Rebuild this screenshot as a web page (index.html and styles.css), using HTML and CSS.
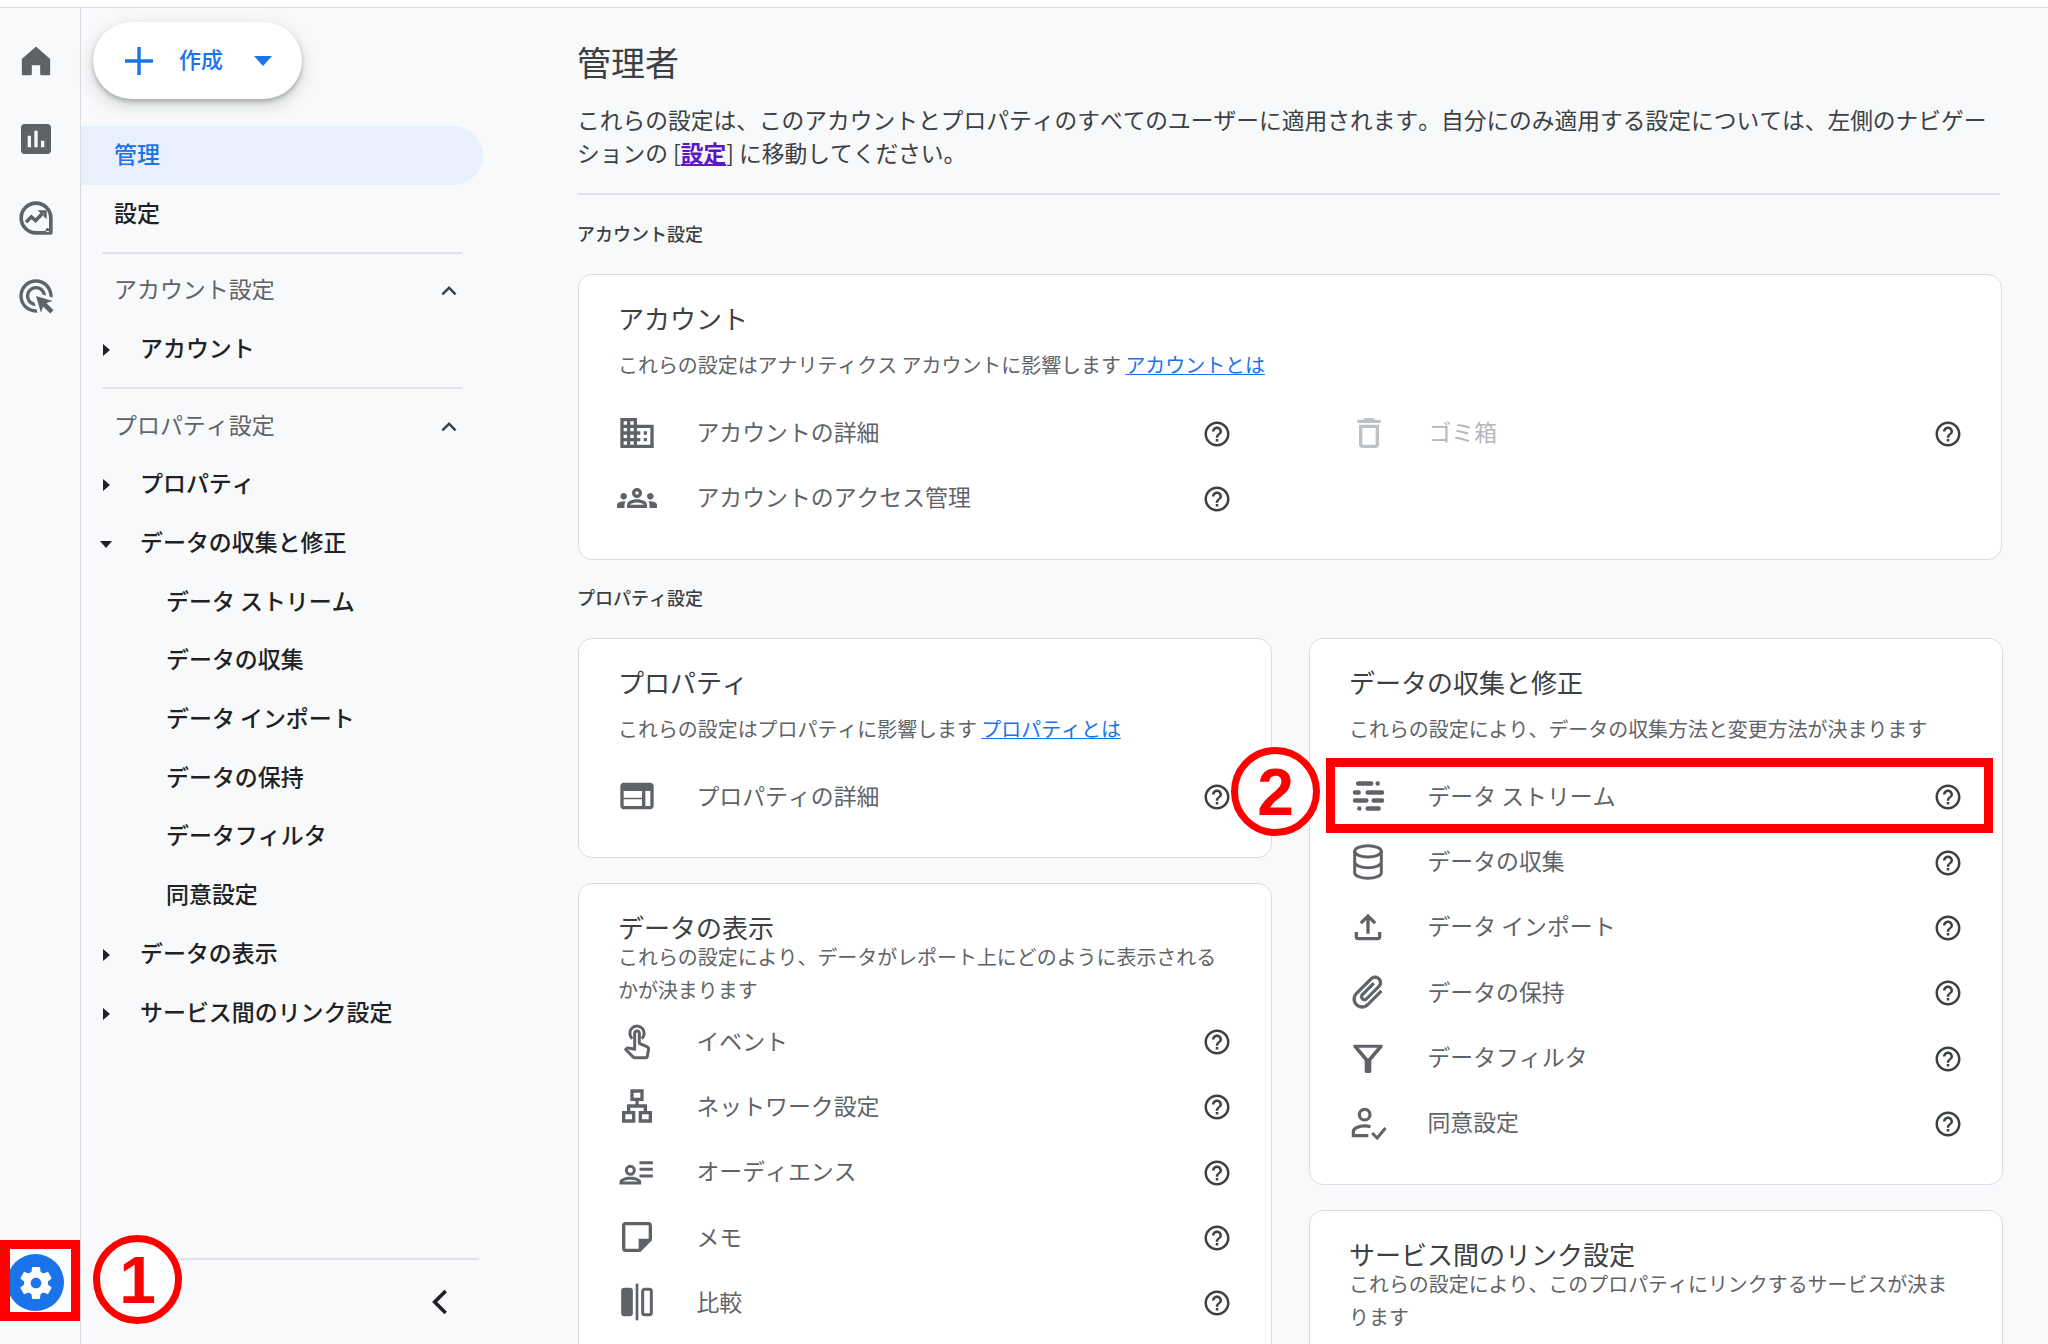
FILE: index.html
```html
<!DOCTYPE html>
<html lang="ja">
<head>
<meta charset="utf-8">
<title>管理者</title>
<link rel="stylesheet" href="styles.css">
</head>
<body>
<svg class="defs" aria-hidden="true">
  <symbol id="help" viewBox="0 0 24 24"><path d="M11 18h2v-2h-2v2zm1-16C6.48 2 2 6.48 2 12s4.48 10 10 10 10-4.48 10-10S17.52 2 12 2zm0 18c-4.41 0-8-3.59-8-8s3.59-8 8-8 8 3.59 8 8-3.59 8-8 8zm0-14c-2.21 0-4 1.79-4 4h2c0-1.1.9-2 2-2s2 .9 2 2c0 2-3 1.75-3 5h2c0-2.25 3-2.5 3-5 0-2.21-1.79-4-4-4z"/></symbol>
  <symbol id="caret-r" viewBox="0 0 24 24"><path d="M9 6l7 6-7 6z"/></symbol>
  <symbol id="caret-d" viewBox="0 0 24 24"><path d="M6 9h12l-6 7z"/></symbol>
  <symbol id="chev-up" viewBox="0 0 24 24"><path d="M12 8l-6 6 1.41 1.41L12 10.83l4.59 4.58L18 14z"/></symbol>
</svg>
<div class="topbar"></div>
<div class="app">
  <nav class="rail">
    <a class="rail-item"><svg class="rail-icon" viewBox="0 0 24 24"><path d="M4 20v-9l8-7 8 7v9h-5v-6H9v6z" stroke="currentColor" stroke-width="1" stroke-linejoin="round"/></svg></a>
    <a class="rail-item"><svg class="rail-icon" viewBox="0 0 24 24"><path d="M19 3H5c-1.1 0-2 .9-2 2v14c0 1.1.9 2 2 2h14c1.1 0 2-.9 2-2V5c0-1.1-.9-2-2-2zM9 17H7v-7h2v7zm4 0h-2V7h2v10zm4 0h-2v-4h2v4z"/></svg></a>
    <a class="rail-item"><svg class="rail-icon" viewBox="0 0 24 24"><path d="M12 2a10 10 0 1 0 0 20h8.5a1.5 1.5 0 0 0 1.5-1.5V12A10 10 0 0 0 12 2zm0 17.800a7.800 7.800 0 1 1 7.800-7.800v6.400a1.200 1.200 0 1 0 .2 1.400z" fill-rule="evenodd"/><path d="M6 14.500l3.200-3.200 2.600 2.200 4.200-4.400" fill="none" stroke="currentColor" stroke-width="2.100"/><path d="M13 7.300h5.400v5.400l-1.900-1.700V9.200h-1.800z"/></svg></a>
    <a class="rail-item"><svg class="rail-icon" viewBox="0 0 24 24"><path d="M11.71 17.99C8.53 17.84 6 15.22 6 12c0-3.31 2.69-6 6-6 3.22 0 5.84 2.53 5.99 5.71l-2.1-.63C15.48 9.31 13.89 8 12 8c-2.21 0-4 1.79-4 4 0 1.89 1.31 3.48 3.08 3.89l.63 2.1zM22 12c0 .3-.01.6-.04.9l-1.97-.59c.01-.1.01-.21.01-.31 0-4.42-3.58-8-8-8s-8 3.58-8 8 3.58 8 8 8c.1 0 .21 0 .31-.01l.59 1.97c-.3.03-.6.04-.9.04-5.52 0-10-4.48-10-10S6.48 2 12 2s10 4.48 10 10zm-3.77 4.26L22 15l-10-3 3 10 1.26-3.77 4.27 4.27 1.98-1.98-4.28-4.26z"/></svg></a>
    <div class="rail-foot">
      <span class="gear"><svg class="gear-icon" viewBox="0 0 24 24"><path d="M19.14 12.94c.04-.3.06-.61.06-.94 0-.32-.02-.64-.07-.94l2.03-1.58c.18-.14.23-.41.12-.61l-1.92-3.32c-.12-.22-.37-.29-.59-.22l-2.39.96c-.5-.38-1.03-.7-1.62-.94l-.36-2.54c-.04-.24-.24-.41-.48-.41h-3.84c-.24 0-.43.17-.47.41l-.36 2.54c-.59.24-1.13.57-1.62.94l-2.39-.96c-.22-.08-.47 0-.59.22L2.74 8.87c-.12.21-.08.47.12.61l2.03 1.58c-.05.3-.09.63-.09.94s.02.64.07.94l-2.03 1.58c-.18.14-.23.41-.12.61l1.92 3.32c.12.22.37.29.59.22l2.39-.96c.5.38 1.03.7 1.62.94l.36 2.54c.05.24.24.41.48.41h3.84c.24 0 .44-.17.47-.41l.36-2.54c.59-.24 1.13-.56 1.62-.94l2.39.96c.22.08.47 0 .59-.22l1.92-3.32c.12-.22.07-.47-.12-.61l-2.01-1.58zM12 15.2c-1.76 0-3.2-1.44-3.2-3.2s1.44-3.2 3.2-3.2 3.2 1.44 3.2 3.2-1.44 3.2-3.2 3.2z"/></svg></span>
    </div>
  </nav>

  <aside class="sidebar">
    <button class="create">
      <svg class="create-plus" viewBox="0 0 28 28"><path d="M12.3 0h3.4v12.3H28v3.4H15.7V28h-3.4V15.7H0v-3.4h12.3z"/></svg>
      <span class="create-label">作成</span>
      <svg class="create-caret" viewBox="0 0 18 10"><path d="M0 0h18L9 10z"/></svg>
    </button>
    <a class="nav-top active">管理</a>
    <a class="nav-top">設定</a>
    <hr class="nav-rule">
    <div class="nav-head"><span>アカウント設定</span><svg class="chev"><use href="#chev-up"/></svg></div>
    <a class="nav-item"><svg class="caret"><use href="#caret-r"/></svg>アカウント</a>
    <hr class="nav-rule">
    <div class="nav-head"><span>プロパティ設定</span><svg class="chev"><use href="#chev-up"/></svg></div>
    <a class="nav-item"><svg class="caret"><use href="#caret-r"/></svg>プロパティ</a>
    <a class="nav-item"><svg class="caret"><use href="#caret-d"/></svg>データの収集と修正</a>
    <a class="nav-sub">データ ストリーム</a>
    <a class="nav-sub">データの収集</a>
    <a class="nav-sub">データ インポート</a>
    <a class="nav-sub">データの保持</a>
    <a class="nav-sub">データフィルタ</a>
    <a class="nav-sub">同意設定</a>
    <a class="nav-item"><svg class="caret"><use href="#caret-r"/></svg>データの表示</a>
    <a class="nav-item"><svg class="caret"><use href="#caret-r"/></svg>サービス間のリンク設定</a>
    <div class="side-foot">
      <svg class="collapse" viewBox="0 0 24 24"><path d="M15.4 5.4L8.8 12l6.6 6.6" fill="none" stroke="currentColor" stroke-width="2.2"/></svg>
    </div>
  </aside>

  <main class="main">
    <h1 class="page-title">管理者</h1>
    <p class="desc">これらの設定は、このアカウントとプロパティのすべてのユーザーに適用されます。自分にのみ適用する設定については、左側のナビゲーションの [<a class="visited">設定</a>] に移動してください。</p>
    <hr class="main-rule">
    <h2 class="section first">アカウント設定</h2>
    <section class="card">
      <h3 class="card-title">アカウント</h3>
      <p class="card-sub">これらの設定はアナリティクス アカウントに影響します <a class="link">アカウントとは</a></p>
      <div class="two-col">
        <div>
          <div class="row"><svg class="ic" viewBox="0 0 24 24"><path d="M12 7V3H2v18h20V7H12zM6 19H4v-2h2v2zm0-4H4v-2h2v2zm0-4H4V9h2v2zm0-4H4V5h2v2zm4 12H8v-2h2v2zm0-4H8v-2h2v2zm0-4H8V9h2v2zm0-4H8V5h2v2zm10 12h-8v-2h2v-2h-2v-2h2v-2h-2V9h8v10zm-2-8h-2v2h2v-2zm0 4h-2v2h2v-2z"/></svg><span class="row-text">アカウントの詳細</span><svg class="help"><use href="#help"/></svg></div>
          <div class="row"><svg class="ic" viewBox="0 0 24 24"><path d="M4 13c1.1 0 2-.9 2-2s-.9-2-2-2-2 .9-2 2 .9 2 2 2zm1.13 1.1c-.37-.06-.74-.1-1.13-.1-.99 0-1.93.21-2.78.58C.48 14.9 0 15.62 0 16.43V18h4.5v-1.61c0-.83.23-1.61.63-2.29zM20 13c1.1 0 2-.9 2-2s-.9-2-2-2-2 .9-2 2 .9 2 2 2zm4 3.43c0-.81-.48-1.53-1.22-1.85-.85-.37-1.79-.58-2.78-.58-.39 0-.76.04-1.13.1.4.68.63 1.46.63 2.29V18H24v-1.57zm-7.76-2.78c-1.17-.52-2.61-.9-4.24-.9-1.63 0-3.07.39-4.24.9C6.68 14.13 6 15.21 6 16.39V18h12v-1.61c0-1.18-.68-2.26-1.76-2.74zM8.07 16c.09-.23.13-.39.91-.69.97-.38 1.99-.56 3.02-.56s2.05.18 3.02.56c.77.3.81.46.91.69H8.07zM12 8c.55 0 1 .45 1 1s-.45 1-1 1-1-.45-1-1 .45-1 1-1m0-2c-1.66 0-3 1.34-3 3s1.34 3 3 3 3-1.34 3-3-1.34-3-3-3z"/></svg><span class="row-text">アカウントのアクセス管理</span><svg class="help"><use href="#help"/></svg></div>
        </div>
        <div>
          <div class="row disabled"><svg class="ic" viewBox="0 0 24 24"><path d="M16 9v10H8V9h8m-1.5-6h-5l-1 1H5v2h14V4h-3.5l-1-1zM18 7H6v12c0 1.1.9 2 2 2h8c1.1 0 2-.9 2-2V7z"/></svg><span class="row-text">ゴミ箱</span><svg class="help"><use href="#help"/></svg></div>
        </div>
      </div>
    </section>

    <h2 class="section">プロパティ設定</h2>
    <div class="columns">
      <div class="column">
        <section class="card">
          <h3 class="card-title">プロパティ</h3>
          <p class="card-sub">これらの設定はプロパティに影響します <a class="link">プロパティとは</a></p>
          <div class="rows">
            <div class="row"><svg class="ic" viewBox="0 0 24 24"><path d="M20 4H4c-1.1 0-2 .9-2 2v12c0 1.1.9 2 2 2h16c1.1 0 2-.9 2-2V6c0-1.1-.9-2-2-2zm-5 14H4v-4h11v4zm0-5H4V9h11v4zm5 5h-3V9h3v9z"/></svg><span class="row-text">プロパティの詳細</span><svg class="help"><use href="#help"/></svg></div>
          </div>
        </section>
        <section class="card tight">
          <h3 class="card-title">データの表示</h3>
          <p class="card-sub">これらの設定により、データがレポート上にどのように表示されるかが決まります</p>
          <div class="rows">
            <div class="row"><svg class="ic" viewBox="0 0 24 24"><path d="M9.2 10.6a4.3 4.3 0 1 1 5.6 0" fill="none" stroke="currentColor" stroke-width="1.8"/><path d="M10.6 7.4a1.4 1.4 0 0 1 2.8 0v6l4.5 2c.8.4 1.2 1.2 1 2l-.7 3.7c-.1.6-.7 1-1.2 1h-6.2c-.4 0-.8-.2-1-.4l-4.6-4.6.6-.6c.3-.3.7-.4 1.1-.3l3.7.8z" fill="none" stroke="currentColor" stroke-width="1.8" stroke-linejoin="round"/></svg><span class="row-text">イベント</span><svg class="help"><use href="#help"/></svg></div>
            <div class="row"><svg class="ic" viewBox="0 0 24 24"><path d="M13 22h8v-7h-3v-4h-5V9h3V2H8v7h3v2H6v4H3v7h8v-7H8v-2h8v2h-3v7zM10 7V4h4v3h-4zM5 20v-3h4v3H5zm10 0v-3h4v3h-4z"/></svg><span class="row-text">ネットワーク設定</span><svg class="help"><use href="#help"/></svg></div>
            <div class="row"><svg class="ic" viewBox="0 0 24 24"><circle cx="8" cy="11" r="2.4" fill="none" stroke="currentColor" stroke-width="1.8"/><path d="M1.5 19.5v-1.6c0-1.9 3.2-3.1 6.5-3.1s6.500 1.200 6.500 3.100v1.600z"/><path d="M3.500 17.700c1-.7 2.700-1.100 4.500-1.100s3.500.4 4.500 1.100z" fill="#fff"/><path d="M13.500 5.500h8v1.800h-8zM13.500 9.500h8v1.800h-8zM13.500 13.500h8v1.800h-8z"/></svg><span class="row-text">オーディエンス</span><svg class="help"><use href="#help"/></svg></div>
            <div class="row"><svg class="ic" viewBox="0 0 24 24"><path d="M19 3H5c-1.100 0-2 .9-2 2v14c0 1.100.9 2 2 2h9l7-7V5c0-1.100-.9-2-2-2zM5 19V5h14v8h-6v6H5z"/></svg><span class="row-text">メモ</span><svg class="help"><use href="#help"/></svg></div>
            <div class="row"><svg class="ic" viewBox="0 0 24 24"><rect x="2.500" y="3.500" width="7" height="17" rx="1.800"/><rect x="11.200" y="1" width="1.600" height="22"/><rect x="15.400" y="4.400" width="5.200" height="15.200" rx="1.200" fill="none" stroke="currentColor" stroke-width="1.800"/></svg><span class="row-text">比較</span><svg class="help"><use href="#help"/></svg></div>
          </div>
        </section>
      </div>
      <div class="column">
        <section class="card">
          <h3 class="card-title">データの収集と修正</h3>
          <p class="card-sub">これらの設定により、データの収集方法と変更方法が決まります</p>
          <div class="rows">
            <div class="row"><svg class="ic" viewBox="0 0 24 24"><path d="M6.100 4.500h7.800M17.800 4.500h.01M4.200 9.900h2.200M11.800 9.900h8.600M4.200 14.700h6.800M15.400 14.700h5M6.800 19.500h.01M11.800 19.500h6.600" fill="none" stroke="currentColor" stroke-width="2.700" stroke-linecap="round"/></svg><span class="row-text">データ ストリーム</span><svg class="help"><use href="#help"/></svg></div>
            <div class="row"><svg class="ic" viewBox="0 0 24 24"><ellipse cx="12" cy="5.600" rx="8" ry="3.400" fill="none" stroke="currentColor" stroke-width="1.800"/><path d="M4 5.600v12.800c0 1.900 3.600 3.400 8 3.400s8-1.500 8-3.400V5.600M4 12c0 1.900 3.600 3.400 8 3.400s8-1.500 8-3.400" fill="none" stroke="currentColor" stroke-width="1.800"/></svg><span class="row-text">データの収集</span><svg class="help"><use href="#help"/></svg></div>
            <div class="row"><svg class="ic" viewBox="0 0 24 24"><path d="M18 15v3H6v-3H4v3c0 1.100.9 2 2 2h12c1.100 0 2-.9 2-2v-3h-2zM7 9l1.410 1.410L11 7.830V16h2V7.830l2.590 2.580L17 9l-5-5-5 5z"/></svg><span class="row-text">データ インポート</span><svg class="help"><use href="#help"/></svg></div>
            <div class="row"><svg class="ic clip" viewBox="0 0 24 24"><path d="M16.500 6v11.500c0 2.210-1.790 4-4 4s-4-1.790-4-4V5c0-1.380 1.120-2.500 2.500-2.500s2.500 1.120 2.500 2.500v10.500c0 .55-.45 1-1 1s-1-.45-1-1V6H10v9.500c0 1.380 1.120 2.500 2.500 2.500s2.500-1.120 2.500-2.500V5c0-2.210-1.790-4-4-4S7 2.790 7 5v12.500c0 3.040 2.460 5.500 5.500 5.500s5.500-2.460 5.500-5.500V6h-1.500z" stroke="currentColor" stroke-width=".5"/></svg><span class="row-text">データの保持</span><svg class="help"><use href="#help"/></svg></div>
            <div class="row"><svg class="ic" viewBox="0 0 24 24"><path d="M4 4h16c.8 0 1.200.9.700 1.500L14 13.500V20c0 .6-.4 1-1 1h-2c-.6 0-1-.4-1-1v-6.500L3.300 5.500C2.800 4.900 3.200 4 4 4zm2.400 1.800l5.600 6.700 5.600-6.700z" fill-rule="evenodd"/></svg><span class="row-text">データフィルタ</span><svg class="help"><use href="#help"/></svg></div>
            <div class="row"><svg class="ic" viewBox="0 0 24 24"><circle cx="10" cy="7" r="3.200" fill="none" stroke="currentColor" stroke-width="1.900"/><path d="M13.500 14.200c-1-.3-2.200-.5-3.500-.5-3.300 0-6.800 1.500-6.800 3.300v2.600h9" fill="none" stroke="currentColor" stroke-width="1.900"/><path d="M14.500 18l3 3 5-6" fill="none" stroke="currentColor" stroke-width="1.800"/></svg><span class="row-text">同意設定</span><svg class="help"><use href="#help"/></svg></div>
          </div>
        </section>
        <section class="card tight">
          <h3 class="card-title">サービス間のリンク設定</h3>
          <p class="card-sub">これらの設定により、このプロパティにリンクするサービスが決まります</p>
        </section>
      </div>
    </div>
  </main>
</div>

<div class="mark mark-one"><span>1</span></div>
<div class="mark mark-two"><span>2</span></div>
<div class="mark-box"></div>
</body>
</html>
```

FILE: styles.css
```css
* { box-sizing: border-box; }
html, body { height: 100%; }
body {
  margin: 0;
  height: 1344px;
  overflow: hidden;
  background: #f8f9fa;
  color: #202124;
  font-family: "Noto Sans CJK JP", "Noto Sans", "Liberation Sans", sans-serif;
  font-kerning: none;
  display: flex;
  flex-direction: column;
}
.defs { width: 0; height: 0; position: absolute; }
svg { fill: currentColor; flex-shrink: 0; display: block; }

.topbar { height: 8px; background: #fff; border-bottom: 1px solid #dadce0; }
.app { flex: 1; min-height: 0; display: flex; }

/* icon rail */
.rail {
  width: 81px;
  border-right: 1px solid #dadce0;
  padding-top: 13.500px;
  display: flex;
  flex-direction: column;
  color: #5f6368;
}
.rail-item { width: 71px; height: 78.5px; display: flex; align-items: center; justify-content: center; }
.rail-icon { width: 40px; height: 40px; }
.rail-foot {
  margin-top: auto;
  margin-bottom: 23px;
  width: 80px;
  height: 81px;
  background: #fff;
  border: solid #f00;
  border-width: 9px 9px 9px 10px;
  overflow: hidden;
}
.gear {
  width: 57px;
  height: 57px;
  margin: 5px 0 0 -3px;
  border-radius: 50%;
  background: #1a73e8;
  color: #fff;
  display: flex;
  align-items: center;
  justify-content: center;
}
.gear-icon { width: 40px; height: 40px; }

/* sidebar */
.sidebar { width: 497px; flex-shrink: 0; display: flex; flex-direction: column; font-size: 22.95px; line-height: 34px; }
.create {
  margin: 14px 0 27px 12px;
  width: 209px;
  height: 77px;
  border: 0;
  border-radius: 39px;
  background: #fff;
  color: #1a73e8;
  box-shadow: 0 3px 4px rgba(60,64,67,.3), 0 6px 14px 3px rgba(60,64,67,.15);
  display: flex;
  align-items: center;
  padding: 0 0 0 32px;
  font: inherit;
  font-weight: 500;
  font-size: 22px;
}
.create-plus { width: 28px; height: 28px; }
.create-label { margin: 0 0 5px 26px; }
.create-caret { width: 18px; height: 10px; margin-left: 31px; }

.nav-top { height: 59px; width: 402px; padding: 0 0 6px 33px; display: flex; align-items: center; font-weight: 500; }
.nav-top.active { background: #e8f0fe; color: #1a73e8; border-radius: 0 30px 30px 0; }
.nav-rule { margin: 8px 0 8px 21px; width: 360px; border: 0; border-top: 2px solid #e0e2e5; height: 0; }
.nav-head {
  height: 58.7px;
  width: 402px;
  padding: 0 23px 6px 33px;
  display: flex;
  align-items: center;
  justify-content: space-between;
  color: #5f6368;
}
.chev { width: 30px; height: 30px; color: #3c4043; margin: 6px -4px 0 0; }
.nav-item { height: 58.7px; display: flex; align-items: center; padding: 0 0 6px 13px; font-weight: 500; }
.caret { width: 24px; height: 24px; margin: 6px 22px 0 0; }
.nav-sub { height: 58.7px; display: flex; align-items: center; padding: 0 0 6.5px 85px; font-weight: 500; }
.side-foot {
  margin-top: auto;
  height: 86px;
  margin-left: 19px;
  width: 379px;
  border-top: 2px solid #e0e2e5;
  display: flex;
  justify-content: flex-end;
  padding: 22px 19px 0 0;
  color: #202124;
}
.collapse { width: 40px; height: 40px; }

/* main */
.main { flex: 1; min-width: 0; padding: 32px 46px 0 0; }
.page-title { margin: 0 0 20px -1px; font-size: 34px; line-height: 44px; font-weight: 400; color: #3c4043; }
.desc { margin: 0 0 0 -1px; font-size: 22.74px; line-height: 32.6px; color: #3c4043; width: 1423px; }
.visited { color: #5f17c4; font-weight: 700; text-decoration: underline; }
.main-rule { margin: 23.8px 0 0; width: 1422px; border: 0; border-top: 2px solid #e0e2e5; height: 0; }
.section { margin: 25px 0 29px -1px; font-size: 18px; line-height: 24px; font-weight: 500; color: #3c4043; }
.section.first { margin-top: 26px; }

.card {
  background: #fff;
  border: 1px solid #dadce0;
  border-radius: 14px;
  padding: 25px 40px 28px 39px;
}
.card + .card { margin-top: 25.5px; }
.card-title { margin: 0 0 12px; font-size: 26px; line-height: 36px; font-weight: 400; color: #3c4043; }
.card-sub { margin: 0; font-size: 19.95px; line-height: 33px; color: #5f6368; }
.link { color: #1a73e8; text-decoration: underline; }
.card.tight { padding-top: 25px; }
.card.tight .card-title { margin-bottom: -5px; }
.card.tight .rows { margin-top: 2px; }

.two-col { display: grid; grid-template-columns: 613px 612px; column-gap: 119px; margin-top: 19px; }
.rows { margin-top: 19px; }
.columns { display: grid; grid-template-columns: 694px 694px; column-gap: 37px; align-items: start; }

.row { height: 65.33px; display: flex; align-items: center; color: #5f6368; font-size: 22.87px; }
.ic { width: 40px; height: 40px; margin: 0 39.5px 0 -1px; }
.clip { transform: rotate(45deg); }
.row-text { flex: 1; padding-bottom: 3px; }
.help { width: 30px; height: 30px; color: #3c4043; margin: 2px -1px 0 0; }
.row.disabled .ic { color: #bdc1c6; }
.row.disabled .row-text { color: #b4b7bb; }

/* annotations lying over the page */
.mark {
  position: absolute;
  width: 89px;
  height: 89px;
  border: 7px solid #f00;
  border-radius: 50%;
  background: #fff;
  color: #f00;
  display: flex;
  align-items: center;
  justify-content: center;
  font-family: "Liberation Sans", sans-serif;
  font-weight: 700;
  font-size: 66px;
  line-height: 1;
}
.mark-one { left: 93px; top: 1235px; }
.mark-two { left: 1231px; top: 747px; }
.mark-box {
  position: absolute;
  left: 1326px;
  top: 758px;
  width: 667px;
  height: 75px;
  border: 9px solid #f00;
}
```
